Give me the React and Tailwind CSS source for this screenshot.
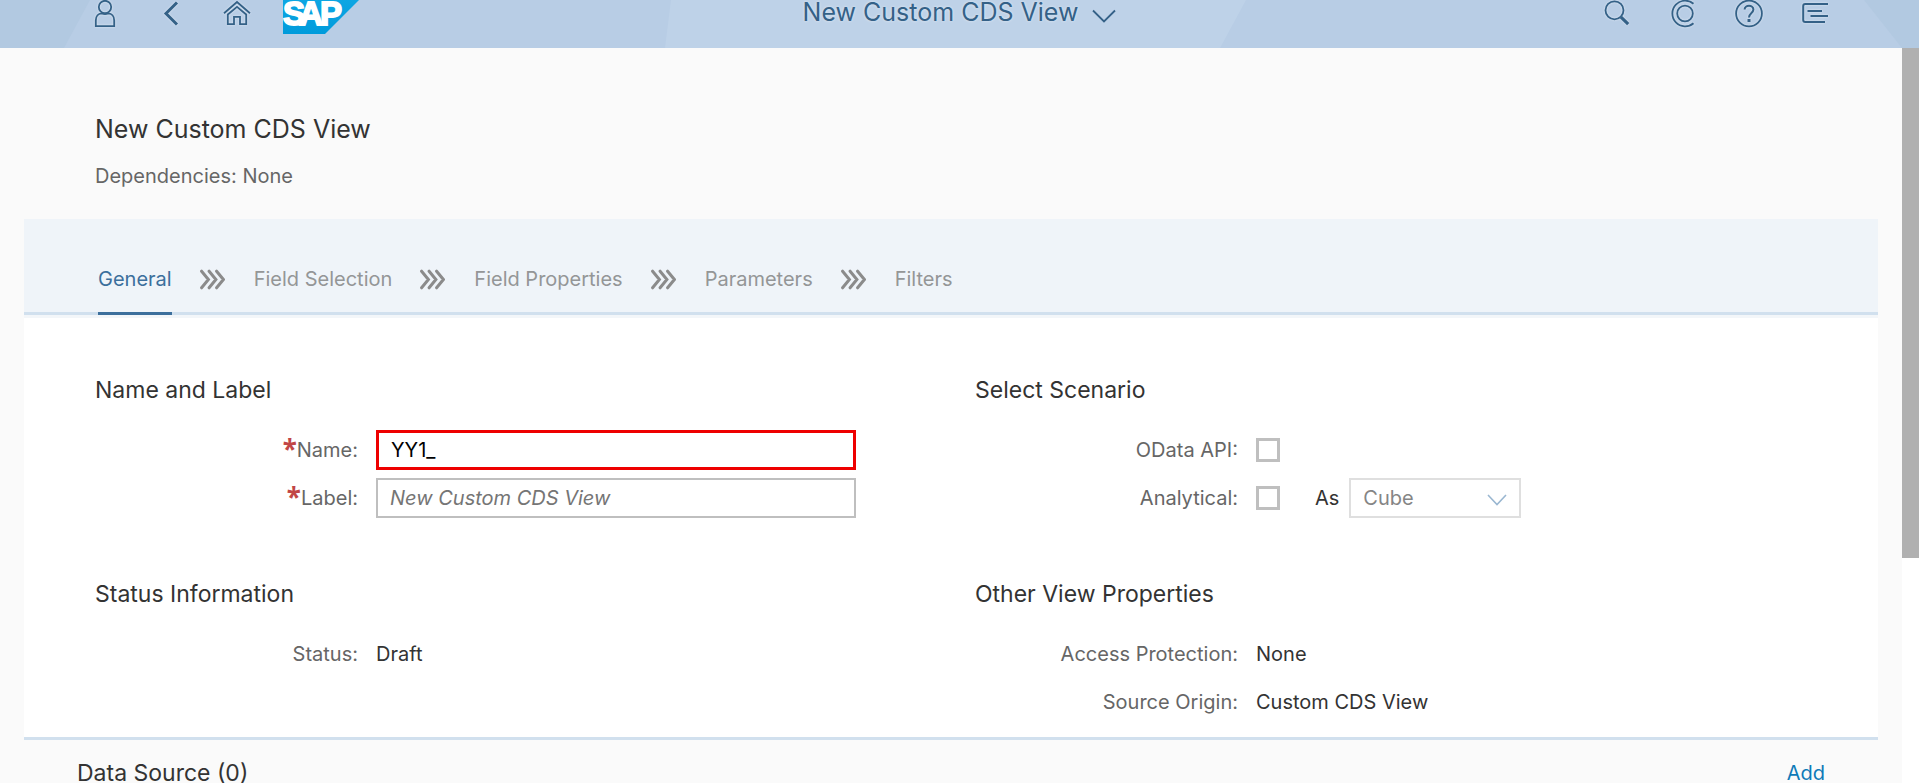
const STEPS = ["General", "Field Selection", "Field Properties", "Parameters", "Filters"];

function ShellIcon({ label, children }) {
  return (
    <button type="button" aria-label={label} className="block size-7 shrink-0">
      <svg
        viewBox="0 0 28 28"
        className="size-7 drop-shadow-[0_0_1px_rgba(255,255,255,0.6)]"
        fill="none"
        stroke="#346187"
        strokeWidth="1.8"
      >
        {children}
      </svg>
    </button>
  );
}

function SapLogo() {
  return (
    <svg viewBox="0 0 76 34" className="ml-8 h-[34px] w-[76px] shrink-0" role="img" aria-label="SAP">
      <defs>
        <linearGradient id="sap" x1="0" y1="0" x2="0" y2="1">
          <stop offset="0" stopColor="#0da6e3" />
          <stop offset="1" stopColor="#009bdb" />
        </linearGradient>
      </defs>
      <path d="M0 0H76L42 34H0Z" fill="url(#sap)" />
      <text
        x="0 16 37"
        y="25"
        fontFamily="'Liberation Sans', sans-serif"
        fontWeight="700"
        fontSize="33"
        fill="#fff"
        stroke="#fff"
        strokeWidth="1.8"
      >
        SAP
      </text>
    </svg>
  );
}

function ShellBar() {
  return (
    <header className="relative h-12 shrink-0 overflow-hidden bg-[#b8cde5] text-[#346187]">
      <svg
        className="absolute inset-0 size-full"
        viewBox="0 0 1919 48"
        preserveAspectRatio="none"
        aria-hidden="true"
      >
        <path d="M0 0H90L64 48H0Z" fill="#b2c9e1" />
        <path d="M671 0H1246L1220 48H665Z" fill="#bed2e8" />
        <path d="M1864 0H1919V48H1902Z" fill="#b2c9e1" />
      </svg>
      <div className="relative grid grid-cols-[1fr_auto_1fr] items-start">
        <div className="flex pl-[91px]">
          <div className="flex gap-[38px]">
            <ShellIcon label="User">
              <circle cx="14" cy="7" r="6.2" />
              <path d="M4.8 26.2V20.5C4.8 16 7.5 13.6 10.5 13.4C12.5 14.2 15.5 14.2 17.5 13.4C20.5 13.6 23.2 16 23.2 20.5V26.2Z" />
            </ShellIcon>
            <ShellIcon label="Back">
              <path d="M20 2.5L9 13.5L20 24.5" strokeWidth="3" />
            </ShellIcon>
            <ShellIcon label="Home">
              <path d="M1 13.2L14 2L27 13.2" />
              <path d="M4.8 14.5L14 6.8L23.2 14.5V24.2H17V16.8H11V24.2H4.8Z" />
            </ShellIcon>
          </div>
          <SapLogo />
        </div>
        <button
          type="button"
          className="flex items-center gap-[14px] text-[25px] leading-[24px] [text-shadow:0_0_3px_rgba(255,255,255,0.6)]"
        >
          New Custom CDS View
          <svg viewBox="0 0 24 14" className="mt-2 h-[14px] w-6" fill="none" stroke="#346187" strokeWidth="1.8">
            <path d="M1 1.5L12 12.5L23 1.5" />
          </svg>
        </button>
        <div className="flex justify-end gap-[38px] pr-[90px]">
          <ShellIcon label="Search">
            <circle cx="11.5" cy="10.3" r="9" />
            <path d="M18 17.2L25.2 24.2" strokeWidth="3.2" />
          </ShellIcon>
          <ShellIcon label="CoPilot">
            <circle cx="16" cy="13.5" r="7.8" />
            <path d="M24.5 3.8A12.8 12.8 0 1 0 24.5 23.2" />
          </ShellIcon>
          <ShellIcon label="Help">
            <circle cx="14" cy="13.5" r="12.9" />
            <path d="M9.6 9.6C9.6 4.4 18.4 4.4 18.4 9.6C18.4 13 14 13 14 17.6" strokeWidth="2" />
            <path d="M14 19V22" strokeWidth="3" />
          </ShellIcon>
          <ShellIcon label="Notifications">
            <path d="M27 4H4.2Q2.2 4 2.2 6V20Q2.2 22 4.2 22H24" strokeWidth="2" />
            <path d="M6.5 11H21M9.5 16H27" strokeWidth="2" />
          </ShellIcon>
        </div>
      </div>
    </header>
  );
}

function StepTabs() {
  return (
    <nav className="flex items-start gap-7 border-b-[3px] border-[#d1e0ee] bg-[#eff4f9] px-[74px] pt-12">
      {STEPS.map((step, i) => (
        <div key={step} className="-mb-[3px] flex items-start gap-[29px]">
          {i > 0 && (
            <svg
              viewBox="0 0 25 24"
              className="h-6 w-[25px]"
              fill="none"
              stroke="#8b8b8b"
              strokeWidth="3"
              strokeLinecap="round"
              aria-hidden="true"
            >
              <path d="M1.6 4.2L8.4 12.5L1.6 20.8M9.1 4.2L15.9 12.5L9.1 20.8M16.6 4.2L23.4 12.5L16.6 20.8" />
            </svg>
          )}
          <button
            type="button"
            className={
              i === 0
                ? "border-b-[3px] border-[#3c6f9c] pb-[21px] leading-6 text-[#3c6f9c]"
                : "border-b-[3px] border-transparent pb-[21px] leading-6 text-[#949697]"
            }
          >
            {step}
          </button>
        </div>
      ))}
    </nav>
  );
}

function Section({ title, children }) {
  return (
    <section>
      <h2 className="mb-5 text-[23px] leading-8 text-[#333]">{title}</h2>
      {children}
    </section>
  );
}

function Row({ label, htmlFor, required, children }) {
  const Tag = htmlFor ? "label" : "span";
  return (
    <div className="grid h-12 grid-cols-[263fr_480fr_53fr] items-center gap-x-[18px]">
      <Tag htmlFor={htmlFor} className="flex justify-end text-[#666]">
        {required && (
          <span className="font-['Noto_Sans'] text-[26px] leading-7 font-bold text-[#c14646]">*</span>
        )}
        {label}:
      </Tag>
      <div className="flex items-center text-[#333]">{children}</div>
    </div>
  );
}

function Check({ id }) {
  return (
    <input
      id={id}
      type="checkbox"
      className="size-6 appearance-none border-[3px] border-[#bfbfbf] bg-white checked:bg-[#3c6f9c]"
    />
  );
}

export default function App() {
  return (
    <div className="flex h-screen flex-col overflow-hidden bg-[#fafafa] font-['Inter','Noto_Sans',sans-serif] text-[20px]">
      <ShellBar />
      <div className="flex min-h-0 grow">
        <main className="min-w-0 grow overflow-hidden px-6">
          <div className="px-[71px] pt-[61px] pb-[31px]">
            <h1 className="text-[25px] leading-10 text-[#333]">New Custom CDS View</h1>
            <p className="mt-[15px] leading-6 text-[#666]">Dependencies: None</p>
          </div>
          <StepTabs />
          <div className="grid grid-cols-2 gap-x-12 gap-y-14 border-t-[3px] border-b-[3px] border-t-[#f3f6f9] border-b-[#d1e0ee] bg-white px-[71px] pt-14 pb-[11px]">
            <Section title="Name and Label">
              <Row label="Name" htmlFor="name" required>
                <input
                  id="name"
                  defaultValue="YY1_"
                  className="h-10 w-full min-w-0 border-[3px] border-[#ee0000] bg-white px-3 text-black outline-none"
                />
              </Row>
              <Row label="Label" htmlFor="label" required>
                <input
                  id="label"
                  placeholder="New Custom CDS View"
                  className="h-10 w-full min-w-0 border-2 border-[#bfbfbf] bg-white px-3 outline-none placeholder:text-[#757575] placeholder:italic"
                />
              </Row>
            </Section>
            <Section title="Select Scenario">
              <Row label="OData API" htmlFor="odata">
                <Check id="odata" />
              </Row>
              <Row label="Analytical" htmlFor="analytical">
                <Check id="analytical" />
                <label htmlFor="kind" className="ml-[35px] mr-[10px]">
                  As
                </label>
                <div className="relative w-[172px]">
                  <select
                    id="kind"
                    disabled
                    className="block h-10 w-full appearance-none border-2 border-[#dfdfdf] bg-white px-3 text-[#858585] opacity-100"
                  >
                    <option>Cube</option>
                  </select>
                  <svg
                    viewBox="0 0 20 12"
                    className="pointer-events-none absolute top-4 right-[14px] h-3 w-5"
                    fill="none"
                    stroke="#9ab7d1"
                    strokeWidth="1.6"
                    aria-hidden="true"
                  >
                    <path d="M1 1L10 10.5L19 1" />
                  </svg>
                </div>
              </Row>
            </Section>
            <Section title="Status Information">
              <Row label="Status">Draft</Row>
            </Section>
            <Section title="Other View Properties">
              <Row label="Access Protection">None</Row>
              <Row label="Source Origin">Custom CDS View</Row>
            </Section>
          </div>
          <div className="flex items-center justify-between px-[53px] pt-[17px]">
            <h2 className="text-[23px] leading-8 text-[#333]">Data Source (0)</h2>
            <button type="button" className="text-[#0f7ab8]">
              Add
            </button>
          </div>
        </main>
        <div className="flex w-[17px] shrink-0 flex-col bg-white" aria-hidden="true">
          <div className="flex-[510] bg-[#b0b0b0]" />
          <div className="flex-[225]" />
        </div>
      </div>
    </div>
  );
}
